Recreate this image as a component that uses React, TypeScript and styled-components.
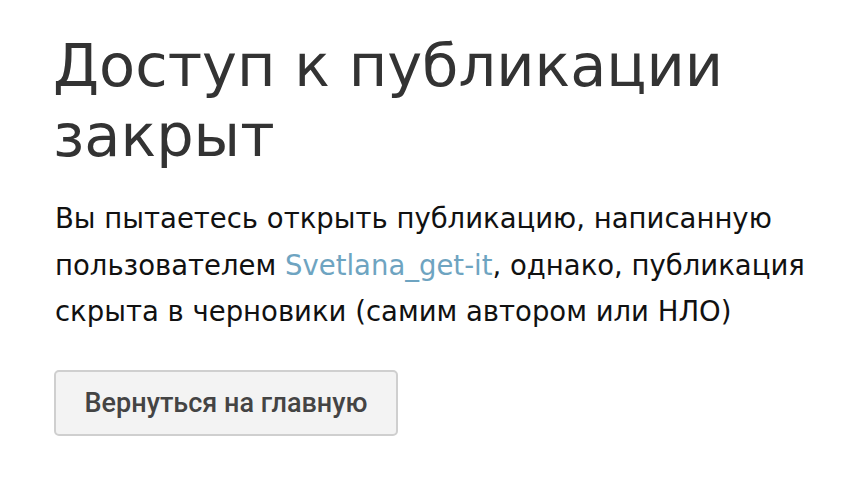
import styled, { createGlobalStyle } from "styled-components";

const GlobalStyle = createGlobalStyle`
  html, body {
    margin: 0;
    padding: 0;
    background: #fff;
  }
`;

const App = () => {
  return (
    <>
      <GlobalStyle />
      <Page>
        <Title>Доступ к публикации закрыт</Title>
        <Text>
          Вы пытаетесь открыть публикацию, написанную пользователем{" "}
          <Link href="#">Svetlana_get-it</Link>, однако, публикация скрыта в
          черновики (самим автором или НЛО)
        </Text>
        <BackButton type="button">Вернуться на главную</BackButton>
      </Page>
    </>
  );
};

export default App;

const Page = styled.div`
  display: flex;
  flex-direction: column;
  align-items: flex-start;
  padding: 31px 20px 0 53px;
  width: 858px;
  box-sizing: border-box;
`;

const Title = styled.h1`
  margin: 0;
  font-family: "DejaVu Sans", Verdana, sans-serif;
  font-weight: 400;
  font-size: 59px;
  line-height: 70px;
  color: #333;
  max-width: 740px;
`;

const Text = styled.p`
  margin: 24px 0 0 2px;
  font-family: "DejaVu Sans", Verdana, sans-serif;
  font-size: 27.5px;
  line-height: 46.5px;
  color: #111;
  max-width: 770px;
`;

const Link = styled.a`
  color: #6ea4c1;
  text-decoration: none;
`;

const BackButton = styled.button`
  margin: 35px 0 0 1px;
  width: 344px;
  height: 66px;
  background: #f3f3f3;
  border: 2px solid #cfcfcf;
  border-radius: 5px;
  font-family: Roboto, "Liberation Sans", Arial, sans-serif;
  font-weight: 500;
  font-size: 27px;
  color: #444;
  cursor: pointer;
`;
